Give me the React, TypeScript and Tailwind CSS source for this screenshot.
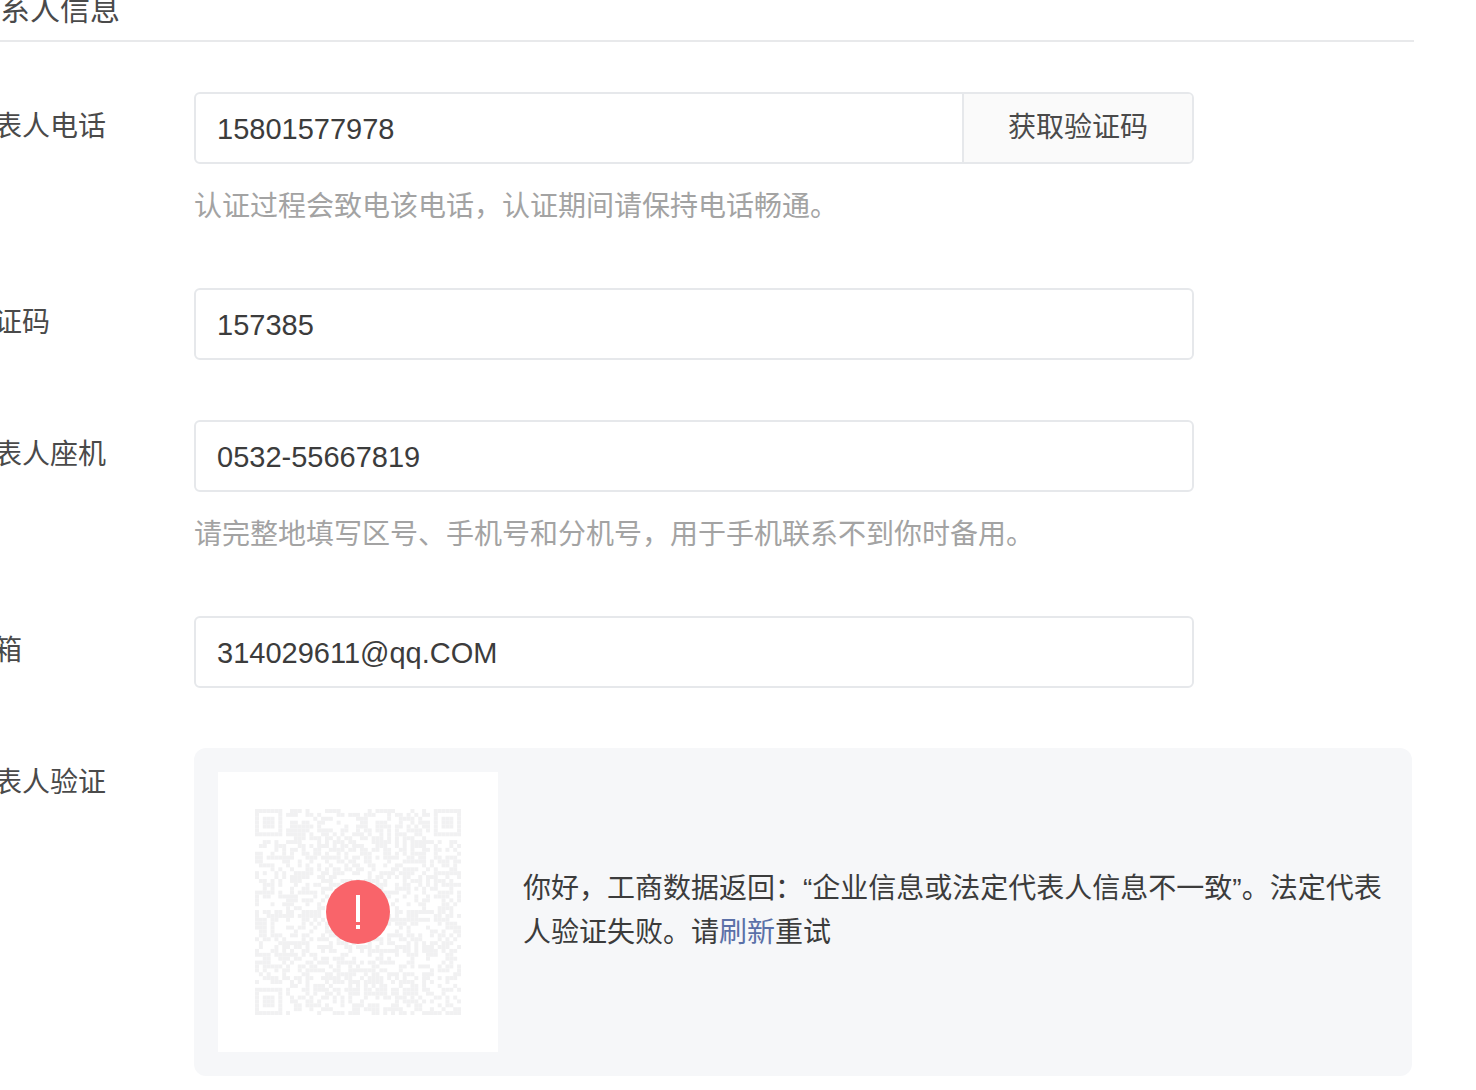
import React from "react";

const N = 53;
function finder(x: number, y: number, r: number, c: number) {
  const dx = c - x, dy = r - y;
  if (dx < 0 || dy < 0 || dx > 6 || dy > 6) return null;
  const ring = dx === 0 || dy === 0 || dx === 6 || dy === 6;
  const core = dx >= 2 && dx <= 4 && dy >= 2 && dy <= 4;
  return ring || core;
}
function cells() {
  const out: { r: number; c: number }[] = [];
  let s = 20240611;
  const rnd = () => {
    s = (s * 1664525 + 1013904223) >>> 0;
    return (s >>> 16) / 65536;
  };
  for (let r = 0; r < N; r++) {
    for (let c = 0; c < N; c++) {
      const v = rnd() < 0.5;
      const f = finder(0, 0, r, c) ?? finder(N - 7, 0, r, c) ?? finder(0, N - 7, r, c);
      const inSep = (r < 8 && c < 8) || (r < 8 && c >= N - 8) || (r >= N - 8 && c < 8);
      if (f === true || (f === null && !inSep && v)) out.push({ r, c });
    }
  }
  return out;
}

function Qr() {
  const list = cells();
  return (
    <svg width="206" height="206" viewBox={`0 0 ${N} ${N}`} className="block blur-[0.4px]">
      {list.map(({ r, c }) => (
        <rect key={`${r}-${c}`} x={c} y={r} width="1.02" height="1.02" fill="#f1f1f2" />
      ))}
    </svg>
  );
}

function Row({ label, hint, children, last }: { label: string; hint?: string; children: React.ReactNode; last?: boolean }) {
  return (
    <div className={`flex ${last ? "" : "mb-[60px]"}`}>
      <div className="w-[228px] shrink-0 text-[28px] leading-[72px] text-[#4a4a4a] h-[72px] -mt-[1px]">{label}</div>
      <div className="flex-1 min-w-0">
        {children}
        {hint && <div className="mt-[23px] h-[41px] text-[28px] leading-[40px] text-[#a3a3a3]">{hint}</div>}
      </div>
    </div>
  );
}

function Field({ value }: { value: string }) {
  return (
    <div className="w-[1000px] h-[72px] border-2 border-[#e6e8eb] rounded-[6px] bg-white px-[21px] flex items-center text-[29px] text-[#3c3c3c] pt-[3px]">
      {value}
    </div>
  );
}

export default function App() {
  return (
    <div
      className="w-[1476px] h-[1090px] overflow-hidden bg-white"
      style={{ fontFamily: '"Liberation Sans", "Noto Sans CJK SC", sans-serif' }}
    >
      <div className="w-[1448px] -ml-[34px]">
        <div className="-mt-[11px] h-[53px] border-b-2 border-[#e8e9eb] pl-[4px] text-[30px] leading-[42px] text-[#4a4a4a]">
          联系人信息
        </div>
        <div className="mt-[50px]">
          <Row label="代表人电话" hint="认证过程会致电该电话，认证期间请保持电话畅通。">
            <div className="w-[1000px] h-[72px] border-2 border-[#e6e8eb] rounded-[6px] bg-white flex overflow-hidden">
              <div className="flex-1 pl-[21px] flex items-center text-[29px] text-[#3c3c3c] pt-[3px]">15801577978</div>
              <div className="w-[230px] border-l-2 border-[#e6e8eb] bg-[#fafafa] flex items-center justify-center text-[28px] text-[#4a4a4a]">
                获取验证码
              </div>
            </div>
          </Row>
          <Row label="验证码">
            <Field value="157385" />
          </Row>
          <Row label="代表人座机" hint="请完整地填写区号、手机号和分机号，用于手机联系不到你时备用。">
            <Field value="0532-55667819" />
          </Row>
          <Row label="邮箱">
            <Field value="314029611@qq.COM" />
          </Row>
          <Row label="代表人验证" last>
            <div className="w-[1218px] h-[328px] rounded-[12px] bg-[#f6f7f9] p-[24px] flex items-center">
              <div className="relative w-[280px] h-[280px] shrink-0 bg-white flex items-center justify-center">
                <Qr />
                <div className="absolute left-[108px] top-[108px] w-[64px] h-[64px] rounded-full bg-[#f9646a] flex flex-col items-center pt-[15px]">
                  <div className="w-[4px] h-[27px] bg-white" />
                  <div className="w-[4px] h-[4px] bg-white mt-[3px]" />
                </div>
              </div>
              <div className="ml-[25px] w-[868px] text-[28px] leading-[44px] text-[#3c3c3c] -mt-[2px]">
                你好，工商数据返回：“企业信息或法定代表人信息不一致”。法定代表人验证失败。请<span className="text-[#5b70a8]">刷新</span>重试
              </div>
            </div>
          </Row>
        </div>
      </div>
    </div>
  );
}
